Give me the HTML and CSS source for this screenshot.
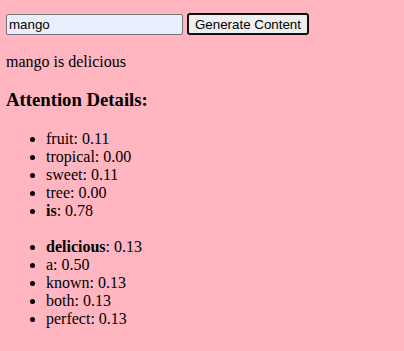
FILE: index.html
```html
<!DOCTYPE html>
<html lang="en">

<head>
  <meta charset="UTF-8" />
  <title>Attention Demo</title>
  <link rel="stylesheet" href="styles.css">
</head>

<body>
  <div class="controles">
    <input type="text" id="entrada" value="mango" />
    <button id="generar">Generate Content</button>
  </div>

  <p class="salida">mango is delicious</p>

  <h3>Attention Details:</h3>
  <ul>
    <li>fruit: 0.11</li>
    <li>tropical: 0.00</li>
    <li>sweet: 0.11</li>
    <li>tree: 0.00</li>
    <li><strong>is</strong>: 0.78</li>
  </ul>
  <ul>
    <li><strong>delicious</strong>: 0.13</li>
    <li>a: 0.50</li>
    <li>known: 0.13</li>
    <li>both: 0.13</li>
    <li>perfect: 0.13</li>
  </ul>
</body>

</html>
```

FILE: styles.css
```css
body {
  margin: 0;
  padding: 13px 6px 8px;
  background-color: lightpink;
  color: #000;
  font-family: 'Liberation Serif', 'Times New Roman', serif;
  font-size: 16px;
}

.controles {
  display: flex;
  align-items: center;
  gap: 4px;
}

#entrada {
  width: 177px;
  height: 21px;
  box-sizing: border-box;
  margin: 0;
  padding: 1px 2px;
  border: 1px solid #767676;
  border-radius: 2px;
  background-color: #e8f0fe;
  font-family: 'Liberation Sans', Arial, sans-serif;
  font-size: 13.33px;
}

#generar {
  height: 22px;
  margin: 0;
  padding: 0 6px;
  border: 2px solid #101010;
  border-radius: 3px;
  background-color: #efefef;
  font-family: 'Liberation Sans', Arial, sans-serif;
  font-size: 13.33px;
  color: #000;
}

.salida {
  margin: 18px 0 16px;
}

h3 {
  font-size: 18.72px;
  margin: 17.7px 0 19.7px;
}

ul {
  margin: 18px 0;
  padding-left: 40px;
  line-height: 18px;
}
```
